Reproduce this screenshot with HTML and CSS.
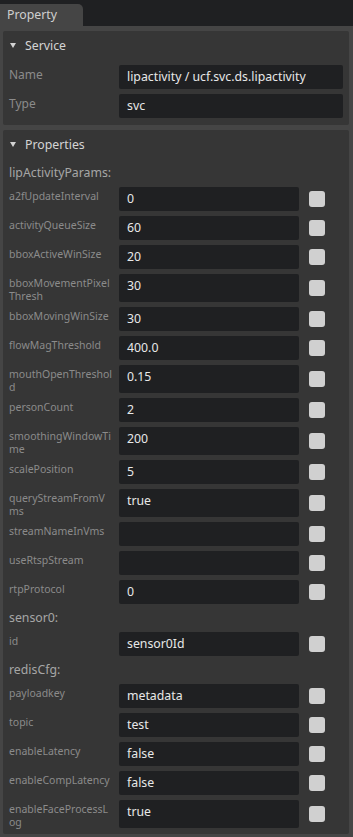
FILE: index.html
```html
<!DOCTYPE html>
<html>
<head>
<meta charset="utf-8">
<link rel="stylesheet" href="styles.css">
</head>
<body>
<div class="topbar"><div class="tab">Property</div></div>
<div class="panel">
  <div class="section">
    <div class="section-header"><svg class="caret" width="6" height="5" viewBox="0 0 6 5"><polygon points="0,0 6,0 3,5" fill="#d2d2d2"/></svg><span>Service</span></div>
    <div class="row svc"><div class="label big">Name</div><div class="field">lipactivity / ucf.svc.ds.lipactivity</div></div>
    <div class="row svc"><div class="label big">Type</div><div class="field">svc</div></div>
  </div>
  <div class="section">
    <div class="section-header"><svg class="caret" width="6" height="5" viewBox="0 0 6 5"><polygon points="0,0 6,0 3,5" fill="#d2d2d2"/></svg><span>Properties</span></div>
    <div class="group">lipActivityParams:</div>
    <div class="row prop"><div class="label">a2fUpdateInterval</div><div class="field">0</div><div class="check"></div></div>
    <div class="row prop"><div class="label">activityQueueSize</div><div class="field">60</div><div class="check"></div></div>
    <div class="row prop"><div class="label">bboxActiveWinSize</div><div class="field">20</div><div class="check"></div></div>
    <div class="row prop"><div class="label">bboxMovementPixelThresh</div><div class="field">30</div><div class="check"></div></div>
    <div class="row prop"><div class="label">bboxMovingWinSize</div><div class="field">30</div><div class="check"></div></div>
    <div class="row prop"><div class="label">flowMagThreshold</div><div class="field">400.0</div><div class="check"></div></div>
    <div class="row prop"><div class="label">mouthOpenThreshold</div><div class="field">0.15</div><div class="check"></div></div>
    <div class="row prop"><div class="label">personCount</div><div class="field">2</div><div class="check"></div></div>
    <div class="row prop"><div class="label">smoothingWindowTime</div><div class="field">200</div><div class="check"></div></div>
    <div class="row prop"><div class="label">scalePosition</div><div class="field">5</div><div class="check"></div></div>
    <div class="row prop"><div class="label">queryStreamFromVms</div><div class="field">true</div><div class="check"></div></div>
    <div class="row prop"><div class="label">streamNameInVms</div><div class="field"></div><div class="check"></div></div>
    <div class="row prop"><div class="label">useRtspStream</div><div class="field"></div><div class="check"></div></div>
    <div class="row prop"><div class="label">rtpProtocol</div><div class="field">0</div><div class="check"></div></div>
    <div class="group">sensor0:</div>
    <div class="row prop"><div class="label">id</div><div class="field">sensor0Id</div><div class="check"></div></div>
    <div class="group">redisCfg:</div>
    <div class="row prop"><div class="label">payloadkey</div><div class="field">metadata</div><div class="check"></div></div>
    <div class="row prop"><div class="label">topic</div><div class="field">test</div><div class="check"></div></div>
    <div class="row prop"><div class="label">enableLatency</div><div class="field">false</div><div class="check"></div></div>
    <div class="row prop"><div class="label">enableCompLatency</div><div class="field">false</div><div class="check"></div></div>
    <div class="row prop"><div class="label">enableFaceProcessLog</div><div class="field">true</div><div class="check"></div></div>
  </div>
</div>
</body>
</html>
```
FILE: styles.css
```css
html, body {
  margin: 0;
  padding: 0;
}
body {
  background: #454545;
  font-family: "Noto Sans", "Open Sans", sans-serif;
  width: 353px;
  height: 837px;
  overflow: hidden;
}
.topbar {
  height: 26px;
  background: #1f2022;
  display: flex;
  align-items: flex-end;
}
.tab {
  width: 76px;
  height: 22px;
  padding-left: 7px;
  background: #454545;
  border-radius: 0 5px 0 0;
  color: #cfcfcf;
  font-size: 12.3px;
  line-height: 22px;
}
.panel {
  padding: 5px 4px 0 3px;
  display: flex;
  flex-direction: column;
  gap: 5px;
}
.section {
  background: #363636;
  border-radius: 2px;
  padding: 0 6px 6px 6px;
  display: flex;
  flex-direction: column;
  gap: 5px;
}
.section:first-child {
  padding-bottom: 7px;
}
.section-header {
  height: 29px;
  display: flex;
  align-items: center;
  gap: 9px;
  color: #d4d4d4;
  font-size: 12.3px;
  padding-left: 1px;
}
.caret {
  display: block;
  flex: none;
}
.group {
  height: 18px;
  line-height: 18px;
  font-size: 12.3px;
  color: #a6a6a6;
}
.row {
  display: grid;
  column-gap: 5px;
  align-items: stretch;
}
.row.svc {
  grid-template-columns: 105px 1fr;
}
.row.prop {
  grid-template-columns: 105px 180px 44px;
}
.label {
  color: #8b8b8b;
  font-size: 10.5px;
  line-height: 12.5px;
  padding-top: 3px;
  word-break: break-all;
}
.label.big {
  font-size: 12px;
  padding-top: 4px;
}
.field {
  background: #1f2022;
  border-radius: 2px;
  min-height: 24px;
  line-height: 24px;
  padding: 0 8px;
  color: #e8e8e8;
  font-size: 12.3px;
  white-space: nowrap;
  overflow: hidden;
}
.check {
  align-self: center;
  justify-self: start;
  margin-left: 5px;
  width: 16px;
  height: 16px;
  border-radius: 3px;
  background: #d0d0d0;
}
```
